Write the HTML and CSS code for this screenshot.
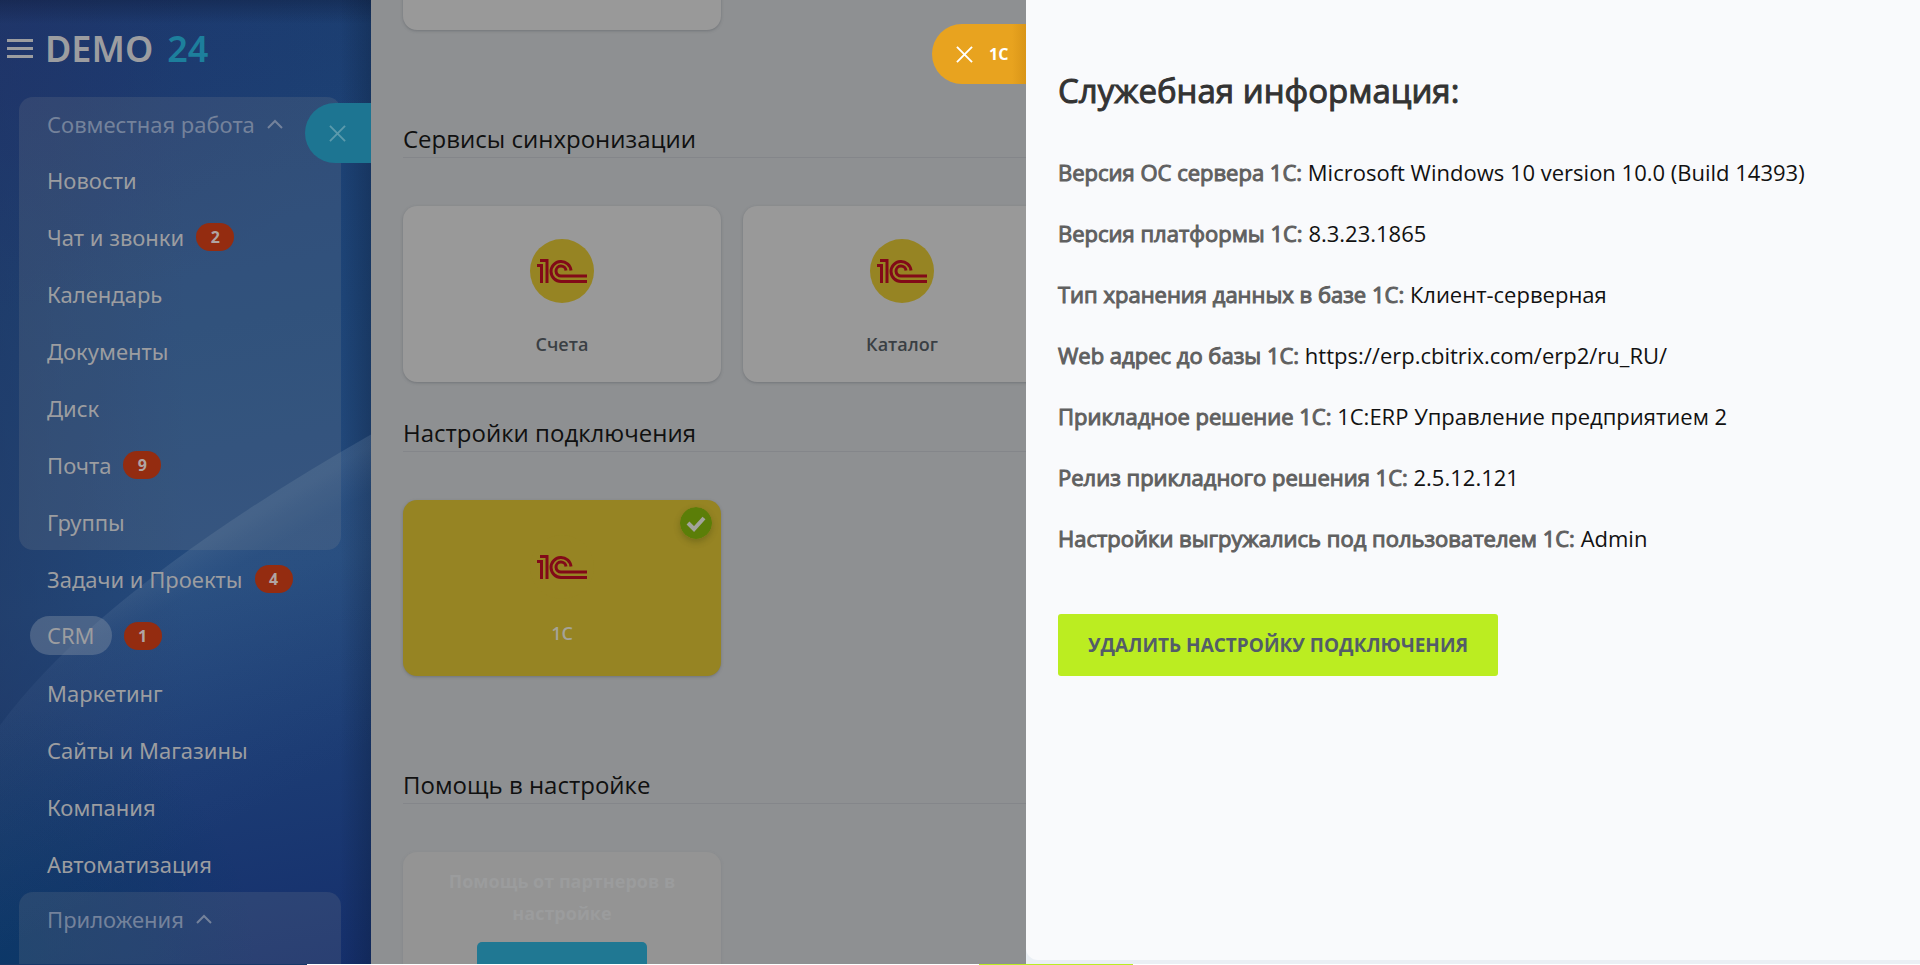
FILE: index.html
```html
<!DOCTYPE html>
<html lang="ru">
<head>
<meta charset="utf-8">
<title>DEMO 24</title>
<link rel="stylesheet" href="styles.css">
</head>
<body>
<svg class="defs" aria-hidden="true">
  <symbol id="logo-1c" viewBox="0 0 50 24">
    <g fill="none" stroke="#820a18" stroke-width="3">
      <path d="M0 6.500h4.500V24M3 1.500h7V24"/>
      <path d="M34 11.500a10 10 0 1 0-10 11h26"/>
      <path d="M29 11.500a5 5 0 1 0-5 5.500h26"/>
    </g>
  </symbol>
  <symbol id="chevron" viewBox="0 0 16 10"><path d="M1 9l7-7 7 7" fill="none" stroke="currentColor" stroke-width="2"/></symbol>
  <symbol id="cross" viewBox="0 0 18 18"><path d="M1 1l16 16M17 1L1 17" fill="none" stroke="currentColor" stroke-width="2"/></symbol>
</svg>
<div class="app">
  <aside class="sidebar">
    <svg class="glare" viewBox="0 0 371 965" preserveAspectRatio="none" aria-hidden="true">
      <defs>
        <linearGradient id="beam" gradientUnits="userSpaceOnUse" x1="170" y1="560" x2="300" y2="790">
          <stop offset="0" stop-color="#a0b4c8" stop-opacity=".16"/>
          <stop offset=".15" stop-color="#7896be" stop-opacity=".08"/>
          <stop offset="1" stop-color="#6482be" stop-opacity="0"/>
        </linearGradient>
      </defs>
      <path d="M371 435Q100 590 0 726V965H371Z" fill="url(#beam)"/>
    </svg>
    <header class="brand">
      <button class="burger" aria-label="Меню"><span></span><span></span><span></span></button>
      <a class="brand-name" href="#"><span>DEMO</span> <b>24</b></a>
    </header>
    <nav class="menu">
      <div class="group">
        <button class="item group-head">Совместная работа <svg class="chevron"><use href="#chevron"/></svg></button>
        <a class="item" href="#">Новости</a>
        <a class="item" href="#">Чат и звонки <span class="badge">2</span></a>
        <a class="item" href="#">Календарь</a>
        <a class="item" href="#">Документы</a>
        <a class="item" href="#">Диск</a>
        <a class="item" href="#">Почта <span class="badge">9</span></a>
        <a class="item" href="#">Группы</a>
      </div>
      <div class="plain">
        <a class="item" href="#">Задачи и Проекты <span class="badge">4</span></a>
        <a class="item" href="#"><span class="current">CRM</span> <span class="badge">1</span></a>
        <a class="item" href="#">Маркетинг</a>
        <a class="item" href="#">Сайты и Магазины</a>
        <a class="item" href="#">Компания</a>
        <a class="item" href="#">Автоматизация</a>
      </div>
      <div class="group apps">
        <button class="item group-head">Приложения <svg class="chevron"><use href="#chevron"/></svg></button>
      </div>
    </nav>
    <button class="tab tab-blue" aria-label="Закрыть"><svg class="cross"><use href="#cross"/></svg></button>
  </aside>

  <main class="content">
    <section class="block first"><div class="cards"><div class="card"></div></div></section>
    <section class="block">
      <h2>Сервисы синхронизации</h2>
      <div class="cards">
        <a class="card" href="#"><span class="disc"><svg class="logo"><use href="#logo-1c"/></svg></span>Счета</a>
        <a class="card" href="#"><span class="disc"><svg class="logo"><use href="#logo-1c"/></svg></span>Каталог</a>
      </div>
    </section>
    <section class="block connection">
      <h2>Настройки подключения</h2>
      <div class="cards">
        <a class="card active" href="#"><span class="disc"><svg class="logo"><use href="#logo-1c"/></svg></span>1С
          <svg class="check" viewBox="0 0 32 32"><circle cx="16" cy="16" r="16" fill="#5b7e08"/><path d="M8 16l6 6 10-11" fill="none" stroke="#a3a39c" stroke-width="4"/></svg>
        </a>
      </div>
    </section>
    <section class="block">
      <h2>Помощь в настройке</h2>
      <div class="cards">
        <div class="card help"><p>Помощь от партнеров в настройке</p><button class="help-button" aria-label="Помощь"></button></div>
      </div>
    </section>
  </main>

  <aside class="panel">
    <button class="tab tab-orange"><svg class="cross"><use href="#cross"/></svg>1С</button>
    <h1>Служебная информация:</h1>
    <dl class="info">
      <div><dt>Версия ОС сервера 1С:</dt> <dd>Microsoft Windows 10 version 10.0 (Build 14393)</dd></div>
      <div><dt>Версия платформы 1С:</dt> <dd>8.3.23.1865</dd></div>
      <div><dt>Тип хранения данных в базе 1С:</dt> <dd>Клиент-серверная</dd></div>
      <div><dt>Web адрес до базы 1С:</dt> <dd>https://erp.cbitrix.com/erp2/ru_RU/</dd></div>
      <div><dt>Прикладное решение 1С:</dt> <dd>1С:ERP Управление предприятием 2</dd></div>
      <div><dt>Релиз прикладного решения 1С:</dt> <dd>2.5.12.121</dd></div>
      <div><dt>Настройки выгружались под пользователем 1С:</dt> <dd>Admin</dd></div>
    </dl>
    <button class="remove">Удалить настройку подключения</button>
  </aside>
  <footer class="edge"></footer>
</div>
</body>
</html>
```
FILE: styles.css
```css
* { box-sizing: border-box; }
body { margin: 0; font-family: "Open Sans", "Noto Sans", sans-serif; }
button { border: 0; padding: 0; background: none; font: inherit; color: inherit; cursor: pointer; }
a { color: inherit; text-decoration: none; }
.defs { position: absolute; width: 0; height: 0; }
.app { display: grid; grid-template-columns: 371px minmax(0, 655fr) minmax(0, 894fr); grid-template-rows: minmax(0, 1fr) 1px; height: 100vh; overflow: hidden; background: #eaeff4; }
.edge { grid-column: 1 / -1; background: linear-gradient(90deg, #173868 16%, #fff 16%, #fff 51%, #bbed21 51%, #bbed21 59%, #fff 59%); }

.sidebar {
  position: relative; overflow: hidden; color: #9c9da0;
  font-family: "Noto Sans", sans-serif;
  background:
    linear-gradient(90deg, transparent 340px, rgba(10, 25, 50, .3)),
    linear-gradient(180deg, rgba(12, 20, 45, .35), transparent 24px),
    radial-gradient(ellipse 380px 260px at 0 5%, rgba(32, 46, 106, .45), transparent),
    radial-gradient(ellipse 260px 260px at 0 100%, rgba(8, 56, 104, .8), transparent),
    linear-gradient(90deg, rgba(32, 56, 100, .6), transparent 50%),
    linear-gradient(170deg, #1b3d70 0, #1e4578 35%, #244a7c 60%, #1c3c74 78%, #152f6c 100%);
}
.glare { position: absolute; inset: 0; width: 100%; height: 100%; }
.brand { position: relative; display: flex; align-items: center; gap: 12px; height: 97px; padding: 0 7px; }
.burger { display: grid; gap: 5px; width: 26px; }
.burger span { height: 3px; background: #9c9da0; }
.brand-name { display: flex; gap: 14px; font-size: 36px; font-weight: 600; }
.brand-name b { color: #1d7f9c; font-weight: 600; }
.menu { position: relative; padding: 0 30px 0 19px; }
.group { border-radius: 14px; background: rgba(150, 150, 150, .17); }
.item { display: flex; align-items: center; gap: 12px; width: 100%; height: 57px; padding-left: 28px; font-size: 22px; white-space: nowrap; }
.item.group-head { height: 54px; color: #74829b; }
.apps { padding-bottom: 40px; }
.chevron { width: 16px; height: 10px; }
.badge { width: 38px; height: 28px; border-radius: 14px; background: #942c10; color: #b0a5a3; font-size: 16px; font-weight: 700; line-height: 28px; text-align: center; }
.current { margin-left: -17px; padding: 0 17px; height: 39px; line-height: 39px; border-radius: 20px; background: rgba(150, 160, 175, .35); }

.tab { position: absolute; display: flex; align-items: center; height: 60px; border-radius: 30px 0 0 30px; }
.cross { width: 17px; height: 17px; }
.tab-blue { right: 0; top: 103px; width: 66px; padding-left: 24px; background: #1d7592; color: #5b9aac; }
.tab-orange { right: 100%; top: 24px; width: 94px; padding-left: 24px; gap: 16px; background: linear-gradient(90deg, #e8a31f 80px, #d99518); color: #fff; font-size: 16px; font-weight: 700; }

.content { padding-left: 32px; overflow: hidden; background: #8e9092; color: #101010; }
.block { margin-bottom: 34px; }
.block h2 { margin: 0 0 48px; height: 36px; border-bottom: 1px solid #84868a; font-size: 24px; font-weight: 400; line-height: 33px; }
.cards { display: flex; gap: 22px; }
.card {
  position: relative; display: flex; flex-direction: column; align-items: center; flex: none;
  width: 318px; height: 176px; padding-top: 33px; border-radius: 14px; background: #999;
  box-shadow: 0 1px 3px rgba(80, 85, 90, .45); color: #3a3f44; font-size: 18px; font-weight: 600; line-height: 24px;
}
.first { height: 30px; margin-bottom: 92px; display: flex; align-items: end; }
.connection { margin-bottom: 92px; }
.disc { display: grid; place-items: center; width: 64px; height: 64px; margin-bottom: 29px; border-radius: 50%; background: #968423; }
.logo { width: 50px; height: 24px; }
.active { padding-top: 35px; background: #968423; color: #a5a398; }
.active .disc { margin-bottom: 22px; }
.check { position: absolute; top: 7px; right: 9px; width: 32px; height: 32px; border-radius: 50%; box-shadow: 0 3px 6px rgba(50, 60, 10, .3); }
.help { padding: 13px 40px 0; background: #949494; box-shadow: 0 1px 3px rgba(110, 112, 118, .35); color: #9b9c9d; font-weight: 700; text-align: center; line-height: 32px; }
.help p { margin: 0 0 13px; }
.help-button { width: 170px; height: 47px; flex: none; border-radius: 5px; background: #207893; }

.panel { position: relative; margin-bottom: 4px; padding: 67px 32px 0; background: #f9fafc; border-radius: 0 0 0 12px; }
.panel h1 { margin: 0 0 41px; color: #333; font-size: 33px; font-weight: 400; line-height: 48px; -webkit-text-stroke: 1px #333; }
.info { display: grid; gap: 29px; margin: 0 0 60px; font-size: 22px; line-height: 32px; }
.info dt, .info dd { display: inline; margin: 0; }
.info dt { color: #606060; -webkit-text-stroke: 1px #606060; }
.info dd { color: #111; }
.remove { height: 62px; padding: 0 30px; border-radius: 3px; background: #bbed21; color: #535c69; font-size: 19px; font-weight: 700; text-transform: uppercase; }
```
